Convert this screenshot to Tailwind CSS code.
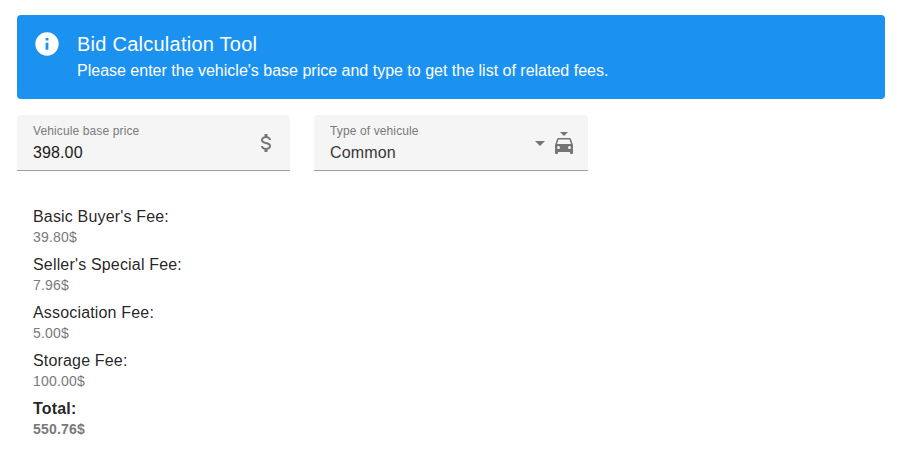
<!DOCTYPE html>
<html lang="en"><head><meta charset="utf-8"><title>Bid Calculation Tool</title>
<script src="https://cdn.jsdelivr.net/npm/@tailwindcss/browser@4"></script></head>
<body class="bg-white font-['Liberation_Sans',Arial,sans-serif] text-black/87">
<main class="pl-[17px] pr-[17px] pt-[15px]">
<section class="flex h-[84px] gap-4 rounded bg-[#1c92f0] px-4 pt-[15px] text-white">
<svg class="size-7 shrink-0" viewBox="0 0 24 24" fill="currentColor"><path d="M13.2 9h-2.4V6.8h2.4m0 10.2h-2.4v-6h2.4M12 2A10 10 0 0 0 2 12a10 10 0 0 0 10 10 10 10 0 0 0 10-10A10 10 0 0 0 12 2Z"/></svg>
<div><h1 class="h-[29px] text-xl leading-7 tracking-[0.25px]">Bid Calculation Tool</h1><p class="text-base leading-6">Please enter the vehicle's base price and type to get the list of related fees.</p></div>
</section>
<form class="mt-4 flex gap-6">
<div class="flex h-14 w-[273px] items-center justify-between rounded-t border-b border-[#9e9e9e] bg-[#f5f5f5] pl-4 pr-3">
<div><div class="text-xs leading-5 tracking-[0.12px] text-[#7a7a7a]">Vehicule base price</div><div class="text-base leading-6 tracking-[0.12px] text-[#1a1a1a]">398.00</div></div>
<svg class="mt-px size-6 text-[#757575]" viewBox="0 0 24 24" fill="currentColor"><path d="M7 15h2c0 1.08 1.37 2 3 2s3-.92 3-2c0-1.1-1.04-1.5-3.24-2.03C9.64 12.44 7 11.78 7 9c0-1.79 1.47-3.31 3.5-3.82V3h3v2.18C15.53 5.69 17 7.21 17 9h-2c0-1.08-1.37-2-3-2s-3 .92-3 2c0 1.1 1.04 1.5 3.24 2.03C14.36 11.56 17 12.22 17 15c0 1.79-1.47 3.31-3.5 3.82V21h-3v-2.18C8.47 18.31 7 16.79 7 15Z"/></svg>
</div>
<div class="flex h-14 w-[274px] items-center justify-between rounded-t border-b border-[#9e9e9e] bg-[#f5f5f5] pl-4 pr-3">
<div><div class="text-xs leading-5 tracking-[0.12px] text-[#7a7a7a]">Type of vehicule</div><div class="text-base leading-6 tracking-[0.15px] text-[#383838]">Common</div></div>
<div class="mt-px flex text-[#757575]"><svg class="size-6" viewBox="0 0 24 24" fill="currentColor"><path d="m7 10 5 5 5-5Z"/></svg>
<svg class="size-6" viewBox="0 0 24 24" fill="currentColor" fill-rule="evenodd"><path d="M8 1h8l-4 4ZM5 13l1.5-4.5h11L19 13ZM17.5 18a1.5 1.5 0 1 1 0-3 1.5 1.5 0 0 1 0 3ZM6.5 18a1.5 1.5 0 1 1 0-3 1.5 1.5 0 0 1 0 3ZM18.92 8c-.2-.58-.76-1-1.42-1h-11c-.66 0-1.22.42-1.42 1L3 14v8a1 1 0 0 0 1 1h1a1 1 0 0 0 1-1v-1h12v1a1 1 0 0 0 1 1h1a1 1 0 0 0 1-1v-8Z"/></svg></div>
</div>
</form>
<dl class="ml-4 mt-[34px] text-base tracking-[0.17px]">
<div class="h-12"><dt class="leading-6">Basic Buyer's Fee:</dt><dd class="text-sm leading-4 tracking-[0.2px] text-[#7a7a7a]">39.80$</dd></div>
<div class="h-12"><dt class="leading-6">Seller's Special Fee:</dt><dd class="text-sm leading-4 tracking-[0.2px] text-[#7a7a7a]">7.96$</dd></div>
<div class="h-12"><dt class="leading-6">Association Fee:</dt><dd class="text-sm leading-4 tracking-[0.2px] text-[#7a7a7a]">5.00$</dd></div>
<div class="h-12"><dt class="leading-6">Storage Fee:</dt><dd class="text-sm leading-4 tracking-[0.2px] text-[#7a7a7a]">100.00$</dd></div>
<div class="font-bold"><dt class="leading-6">Total:</dt><dd class="text-sm leading-4 tracking-[0.2px] text-[#7a7a7a]">550.76$</dd></div>
</dl></main></body></html>
